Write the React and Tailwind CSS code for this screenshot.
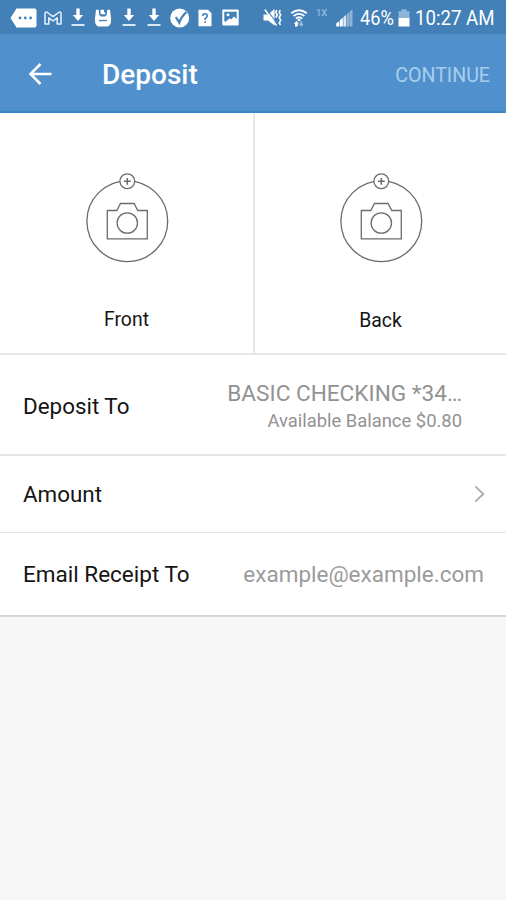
function MessageIcon() {
  return (
    <svg className="ml-[10px] h-5 w-[27px] shrink-0" viewBox="0 0 27 20" fill="none">
      <path d="M6.5 .5H24.5Q26.5 .5 26.5 2.5V17.5Q26.5 19.5 24.5 19.5H6.5L.5 10Z" fill="#fff" />
      <circle cx="10" cy="10" r="1.4" fill="#4380b8" />
      <circle cx="15.3" cy="10" r="1.4" fill="#4380b8" />
      <circle cx="20.6" cy="10" r="1.4" fill="#4380b8" />
    </svg>
  );
}

function MailIcon() {
  return (
    <svg className="ml-[7px] h-[14px] w-[18px] shrink-0" viewBox="0 0 18 14" fill="none" stroke="#e8f1fa" strokeWidth="1.5" strokeLinejoin="round">
      <path d="M1 2.5Q1 .8 2.7 1L9 5.6L15.3 1Q17 .8 17 2.5V13H13.2V6.8L9 10L4.8 6.8V13H1Z" />
    </svg>
  );
}

function DownloadIcon({ className }) {
  return (
    <svg className={`h-[19px] w-[14px] shrink-0 ${className}`} viewBox="0 0 14 19">
      <path d="M5.3 .5H8.7V7H12.2L7 13L1.8 7H5.3Z" fill="#fff" />
      <path d="M.5 16H13.5V18H.5Z" fill="#d9e8f5" />
    </svg>
  );
}

function SaveIcon() {
  return (
    <svg className="ml-[9px] h-[18px] w-[18px] shrink-0" viewBox="0 0 18 18">
      <path d="M2 .8H16L17 9Q17.5 17.5 13 17.5H5Q.5 17.5 1 9Z" fill="#fff" />
      <path d="M4.6 0L5.2 5.6Q5.4 7.4 7 7.4H11Q12.6 7.4 12.8 5.6L13.4 0H11.8L11.2 5.2H6.8L6.2 0Z" fill="#4380b8" />
      <path d="M10 0H12.5V3.4H10Z" fill="#4380b8" />
      <path d="M5 11.5H13" stroke="#4380b8" strokeWidth="1.3" />
    </svg>
  );
}

function CheckIcon() {
  return (
    <svg className="ml-[9px] h-5 w-5 shrink-0" viewBox="0 0 20 20">
      <circle cx="9.7" cy="10" r="9.5" fill="#fff" />
      <path d="M5.8 9L9.3 14.5Q11 9 16.5 4" fill="none" stroke="#4380b8" strokeWidth="2.3" />
    </svg>
  );
}

function QuestionFileIcon() {
  return (
    <svg className="ml-[8px] h-[18px] w-[14px] shrink-0" viewBox="0 0 14 18">
      <path d="M1 .8H10L13.5 4.3V17.2H.5V1.3Z" fill="#fff" />
      <path d="M4.7 7Q4.7 4.7 7 4.7Q9.3 4.7 9.3 7Q9.3 8.3 7.1 9.4V11" fill="none" stroke="#4380b8" strokeWidth="1.5" />
      <path d="M6.3 12.3H7.9V14H6.3Z" fill="#4380b8" />
    </svg>
  );
}

function PictureIcon() {
  return (
    <svg className="ml-[10px] h-[17px] w-[17px] shrink-0" viewBox="0 0 17 17">
      <rect x=".3" y=".5" width="16.4" height="16" rx="1" fill="#fff" />
      <path d="M2.3 2.7H14.7V10L12 7.5L9.3 10.3L7.2 9.5L3.5 13L2.3 12Z" fill="#4380b8" />
      <circle cx="6" cy="5.8" r="1.5" fill="#fff" />
    </svg>
  );
}

function MuteIcon() {
  return (
    <svg className="ml-[24px] h-[19px] w-[19px] shrink-0" viewBox="0 0 19 19" fill="none">
      <path d="M.5 6.5H5L11.5 1V17.5L5 12.5H.5Z" fill="#fff" />
      <path d="M3.2 1L14.5 16" stroke="#4380b8" strokeWidth="1.2" />
      <path d="M1.8 1.5L13.5 17.5" stroke="#fff" strokeWidth="1.4" />
      <path d="M13.8 2L12.8 4.5L14.3 7L12.8 9.5M17.2 2L16.2 4.5L17.7 7L16.2 9.5L17.7 12L16.2 15L17.5 17" stroke="#fff" strokeWidth="1.6" />
    </svg>
  );
}

function WifiIcon() {
  return (
    <svg className="ml-[8px] h-[18px] w-[18px] shrink-0" viewBox="0 0 18 18" fill="none" stroke="#fff" strokeWidth="1.8">
      <path d="M1.2 4.3Q9-1.8 16.8 4.3M3.6 7Q9 2.8 14.4 7M5.8 9.6Q9 7 12.2 9.6" />
      <path d="M9 9.5L11 11L9 12.5L7 11Z" fill="#fff" stroke="none" />
      <path d="M6.4 12L9 14.8H7.8V17.5H5V14.8H3.8Z" fill="#fff" stroke="none" />
      <path d="M10.2 12.5H12.2V15H13.6L11.2 17.8L8.8 15H10.2Z" fill="#9bbfdf" stroke="none" />
    </svg>
  );
}

function SignalIcon() {
  return (
    <svg className="ml-[8px] h-[18px] w-[17px] shrink-0" viewBox="0 0 17 18">
      <path d="M.2 14.5L3.4 12V17.5H.2ZM4 11.3L6.8 8.8V17.5H4Z" fill="#fff" />
      <path d="M7.4 8.2L10.2 5.8V17.5H7.4Z" fill="#dce9f5" />
      <path d="M10.8 5.3L13.4 3V17.5H10.8ZM13.8 2.6L16.5 .3V17.5H13.8Z" fill="#8eb4d7" />
    </svg>
  );
}

function BatteryIcon() {
  return (
    <svg className="ml-[4px] h-[18px] w-[12px] shrink-0" viewBox="0 0 12 18">
      <path d="M3.5 .3H8.5V2.3H11.5V9.5H.5V2.3H3.5Z" fill="#8fb5d7" />
      <path d="M.5 9H11.5V17.5H.5Z" fill="#fff" />
    </svg>
  );
}

function StatusBar() {
  return (
    <div className="flex h-[34px] items-center bg-[#4380b8] pt-px text-white">
      <MessageIcon />
      <MailIcon />
      <DownloadIcon className="ml-[9px]" />
      <SaveIcon />
      <DownloadIcon className="ml-[10px]" />
      <DownloadIcon className="ml-[11px]" />
      <CheckIcon />
      <QuestionFileIcon />
      <PictureIcon />
      <MuteIcon />
      <WifiIcon />
      <span className="mb-[9px] ml-[8px] w-[12px] text-[9.5px] leading-none text-[#a9c8e4]">1X</span>
      <SignalIcon />
      <span className="ml-[7px] w-[34px] origin-left scale-x-[0.9] whitespace-nowrap pt-px text-[20.3px] leading-none">46%</span>
      <BatteryIcon />
      <span className="ml-[5px] origin-left scale-x-[0.92] whitespace-nowrap pt-px text-[20.3px] leading-none">10:27 AM</span>
    </div>
  );
}

function CapturePanel({ label, className, labelClass }) {
  return (
    <div className={`flex flex-col items-center pt-[59px] ${className}`}>
      <svg className="h-[92px] w-[84px]" viewBox="0 0 84 92" fill="none" stroke="#6b6b6b" strokeWidth="1.3">
        <circle cx="42.3" cy="49.2" r="40.4" />
        <circle cx="42.3" cy="9.3" r="7.4" fill="#fff" />
        <path d="M38.9 9.3H45.7M42.3 5.9V12.7" strokeWidth="1.5" />
        <path d="M22.3 38.5H31.8L35.5 31.5H49.1L52.8 38.5H62.3V66.8H22.3Z" />
        <circle cx="42.3" cy="51" r="10.2" />
      </svg>
      <span className={`text-[19.4px] leading-6 ${labelClass}`}>{label}</span>
    </div>
  );
}

export default function App() {
  return (
    <div className="flex h-[900px] w-[506px] flex-col overflow-hidden bg-[#f7f7f7] font-[Roboto,sans-serif] text-[#151515]">
      <StatusBar />
      <header className="flex h-[79px] items-center border-b-2 border-[#3a86c8] bg-[#5091cd] pt-[3px] pr-4 pl-[28px]">
        <svg className="mb-px h-6 w-6" viewBox="0 0 24 24" fill="none" stroke="#fff" strokeWidth="2.5">
          <path d="M23.5 12H2.5M12.5 2L2.5 12L12.5 22" />
        </svg>
        <h1 className="ml-[50px] pt-[2px] text-[28px] leading-8 font-medium text-white">Deposit</h1>
        <span className="ml-auto pt-[3px] text-[19.6px] leading-6 text-[#aacdec]">CONTINUE</span>
      </header>

      <section className="flex h-[242px] border-b-2 border-[#e6e6e6] bg-white">
        <CapturePanel label="Front" className="w-[255px] border-r-2 border-[#e8e8e8]" labelClass="mt-[44px]" />
        <CapturePanel label="Back" className="w-[251px]" labelClass="mt-[45px]" />
      </section>

      <div className="flex h-[101px] items-center justify-between border-b-2 border-[#e6e6e6] bg-white pt-[3px] pr-[44px] pl-[23px]">
        <span className="pt-[2px] text-[22.4px]">Deposit To</span>
        <div className="flex flex-col items-end text-[#929292]">
          <span className="text-[22.6px] leading-[28px]">BASIC CHECKING *34…</span>
          <span className="text-[18.4px] leading-[25px]">Available Balance $0.80</span>
        </div>
      </div>

      <div className="flex h-[77px] items-center justify-between border-b border-[#e6e6e6] bg-white pr-[21px] pl-[23px]">
        <span className="pt-[2px] text-[22.4px]">Amount</span>
        <svg className="h-[18px] w-[12px]" viewBox="0 0 12 18" fill="none" stroke="#ababab" strokeWidth="1.8">
          <path d="M2.3 1.3L10.3 9L2.3 16.7" />
        </svg>
      </div>

      <div className="flex h-[84px] items-center justify-between border-b-2 border-[#d5d5d5] bg-white pr-[22px] pl-[23px]">
        <span className="pt-[2px] text-[22.5px]">Email Receipt To</span>
        <span className="pt-[2px] text-[22.5px] text-[#9b9b9b]">example@example.com</span>
      </div>
    </div>
  );
}
